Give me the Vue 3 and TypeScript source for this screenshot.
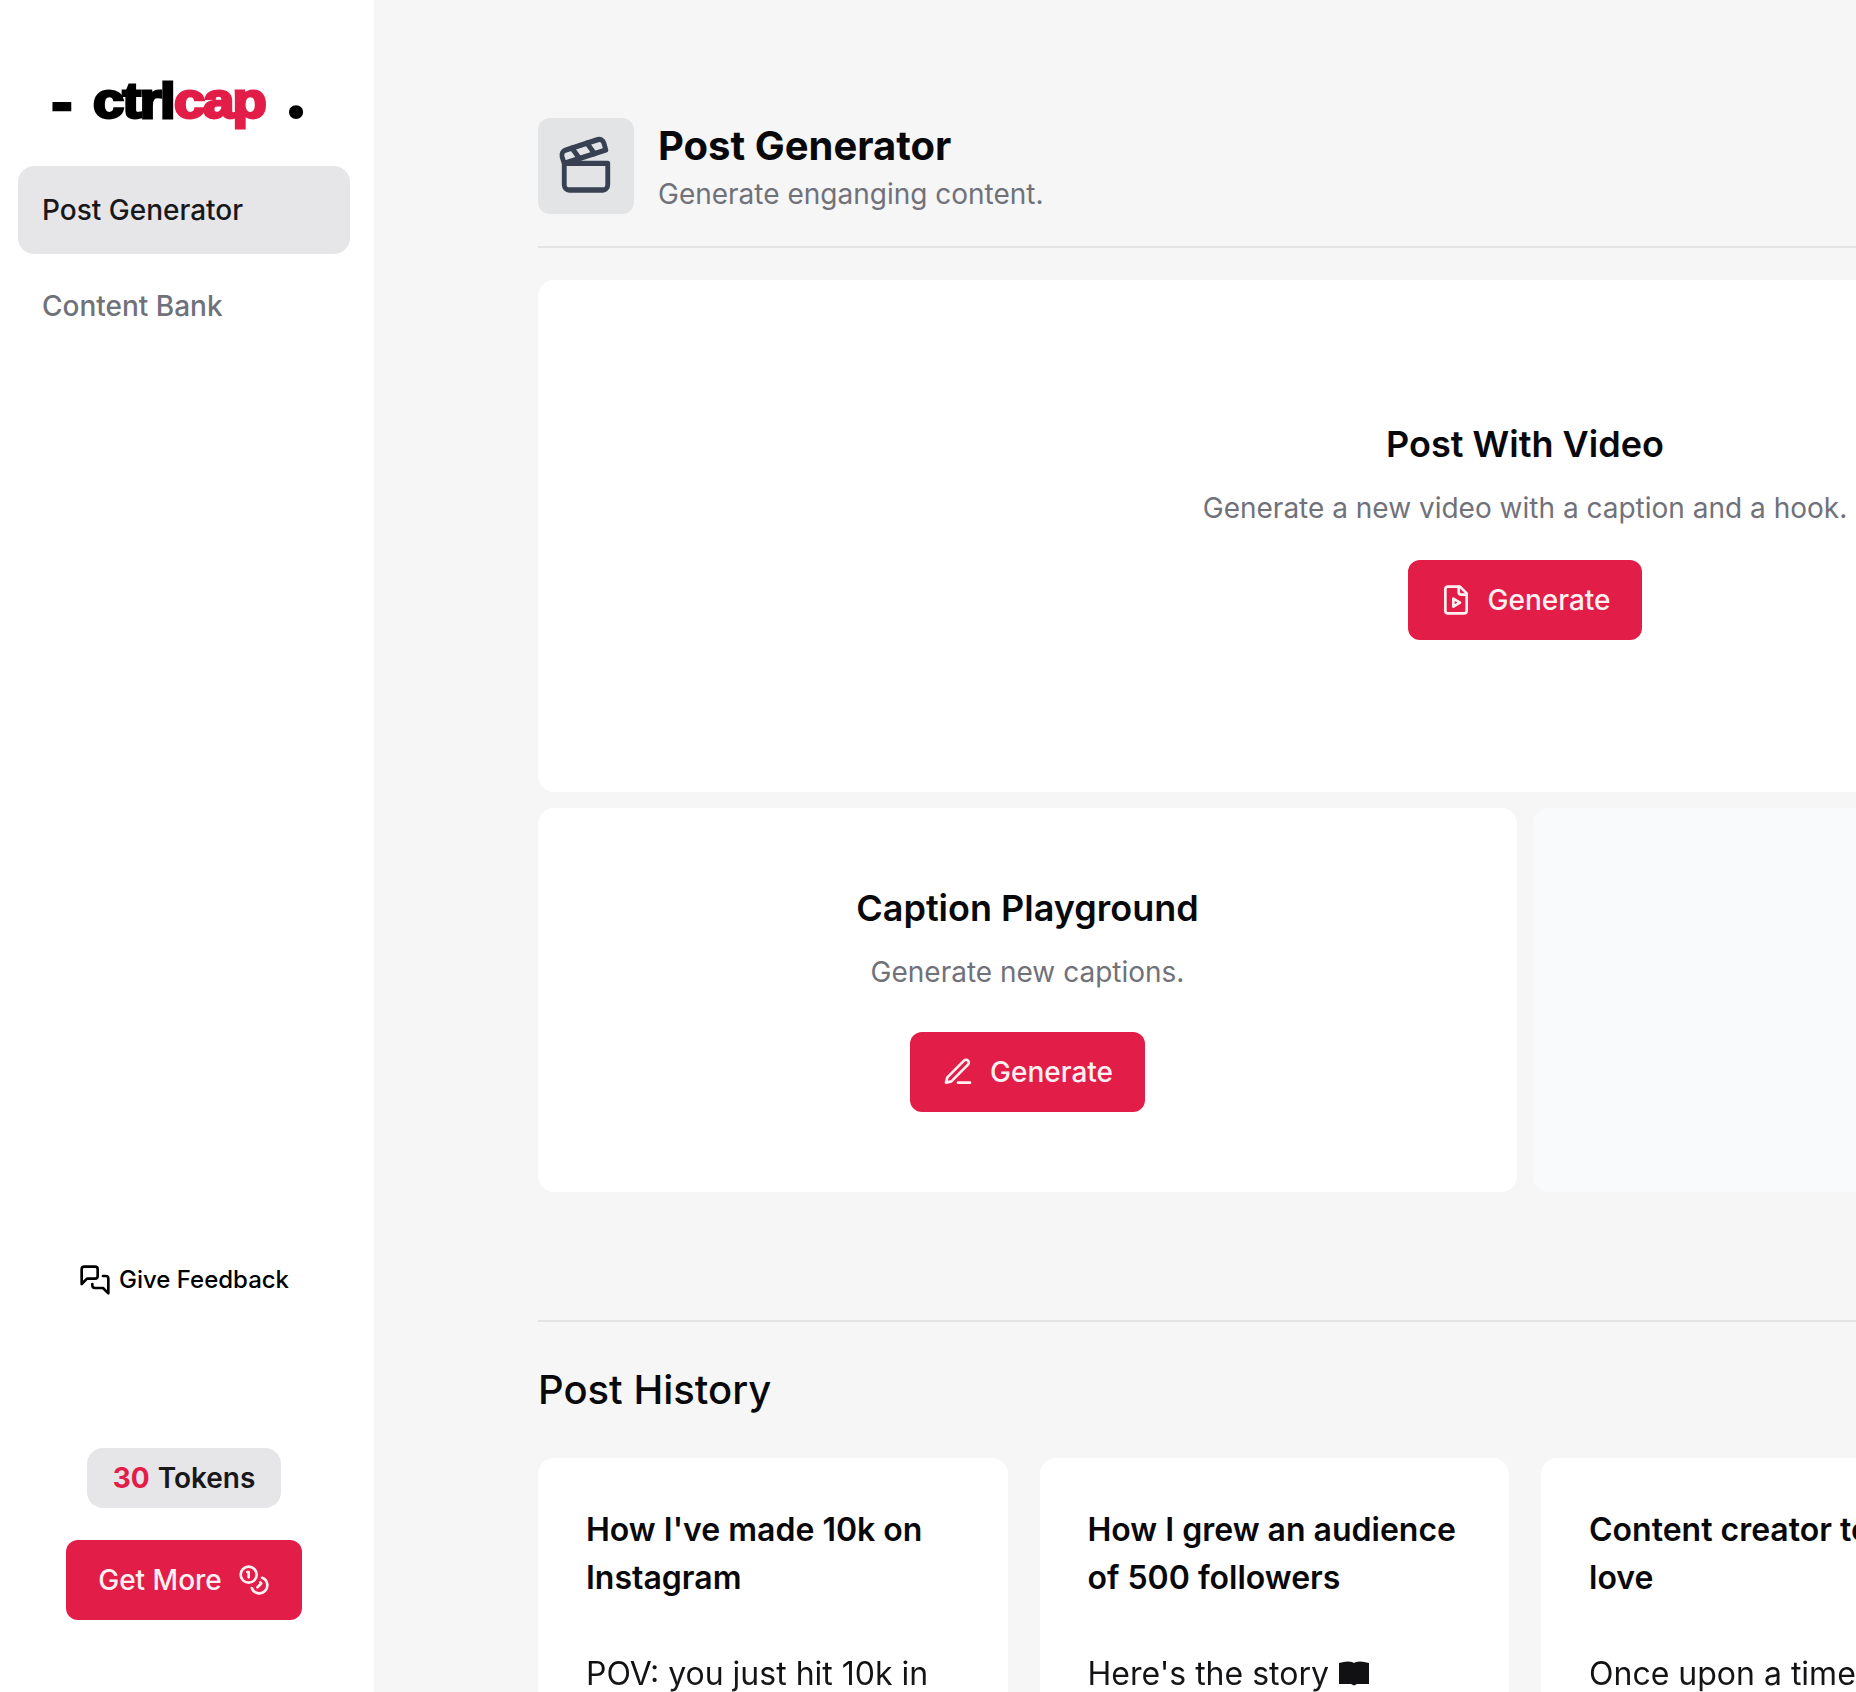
<script setup lang="ts">
interface Post {
  title: string
  body: string
  book?: boolean
}

const nav = [
  { label: 'Post Generator', active: true },
  { label: 'Content Bank', active: false },
]

const posts: Post[] = [
  { title: "How I've made 10k on Instagram", body: 'POV: you just hit 10k in' },
  { title: 'How I grew an audience of 500 followers', body: "Here's the story ", book: true },
  { title: 'Content creator to\nlove', body: 'Once upon a time' },
  { title: '', body: '' },
]
</script>

<template>
  <div class="app">
    <aside class="sidebar">
      <div class="logo">
        <span class="dash">-</span>
        <span class="word"><span class="ctrl">ctrl</span><span class="accent">cap</span></span>
        <span class="dot">.</span>
      </div>
      <nav class="nav">
        <a v-for="item in nav" :key="item.label" class="nav-item" :class="{ active: item.active }">{{ item.label }}</a>
      </nav>
      <div class="side-foot">
        <a class="feedback">
          <svg class="ico" viewBox="0 0 24 24"><path d="M14 9a2 2 0 0 1-2 2H6l-4 4V4a2 2 0 0 1 2-2h8a2 2 0 0 1 2 2z" /><path d="M18 9h2a2 2 0 0 1 2 2v11l-4-4h-6a2 2 0 0 1-2-2v-1" /></svg>
          Give Feedback
        </a>
        <div class="tokens"><b>30</b> Tokens</div>
        <button class="btn more">
          Get More
          <svg class="ico" viewBox="0 0 24 24"><circle cx="8" cy="8" r="6" /><path d="M18.09 10.37A6 6 0 1 1 10.34 18" /><path d="M7 6h1v4" /><path d="m16.71 13.88.7.71-2.82 2.82" /></svg>
        </button>
      </div>
    </aside>

    <main class="main">
      <header class="header">
        <div class="tile">
          <svg class="ico clap" viewBox="0 0 24 24" preserveAspectRatio="none"><path d="M20.2 6 3 11l-.9-2.4c-.3-1.1.3-2.2 1.3-2.5l13.5-4c1.1-.3 2.2.3 2.5 1.3Z" /><path d="m6.2 5.3 3.1 3.9" /><path d="m12.4 3.4 3.1 4" /><path d="M3 11h18v8a2 2 0 0 1-2 2H5a2 2 0 0 1-2-2Z" /></svg>
        </div>
        <div>
          <h1>Post Generator</h1>
          <p class="sub">Generate enganging content.</p>
        </div>
      </header>

      <section class="card hero">
        <h2>Post With Video</h2>
        <p>Generate a new video with a caption and a hook.</p>
        <button class="btn">
          <svg class="ico" viewBox="0 0 24 24"><path d="M15 2H6a2 2 0 0 0-2 2v16a2 2 0 0 0 2 2h12a2 2 0 0 0 2-2V7Z" /><path d="M14 2v4a2 2 0 0 0 2 2h4" /><path d="m10 11 5 3-5 3v-6Z" /></svg>
          Generate
        </button>
      </section>

      <div class="row">
        <section class="card caption">
          <h2>Caption Playground</h2>
          <p>Generate new captions.</p>
          <button class="btn">
            <svg class="ico" viewBox="0 0 24 24"><path d="M12 20h9" /><path d="M16.5 3.5a2.12 2.12 0 0 1 3 3L7 19l-4 1 1-4Z" /></svg>
            Generate
          </button>
        </section>
        <section class="card blank"></section>
      </div>

      <section class="history">
        <h2 class="history-title">Post History</h2>
        <div class="posts">
          <article v-for="(post, i) in posts" :key="i" class="card post">
            <h3>{{ post.title }}</h3>
            <p>{{ post.body }}<svg v-if="post.book" class="book" viewBox="0 0 30 25"><path d="M0 2Q8-.5 13 1L15 2L17 1Q22-.5 30 2V23H18L15 24.500L12 23H0Z" /></svg></p>
          </article>
        </div>
      </section>
    </main>
  </div>
</template>

<style>
body { margin: 0; overflow: hidden; }
</style>

<style scoped>
.app {
  display: flex;
  width: 1856px;
  height: 1692px;
  overflow: hidden;
  background: #f6f6f6;
  color: #09090b;
  font-family: Inter, "Liberation Sans", sans-serif;
  font-size: 28px;
  line-height: 40px;
}
h1, h2, h3, p { margin: 0; }
.ico {
  width: 32px;
  height: 32px;
  flex: none;
  fill: none;
  stroke: currentColor;
  stroke-width: 2;
  stroke-linecap: round;
  stroke-linejoin: round;
}
.sidebar {
  width: 374px;
  flex: none;
  box-sizing: border-box;
  padding: 57px 24px 72px 18px;
  background: #fff;
  display: flex;
  flex-direction: column;
}
.logo {
  display: flex;
  align-items: baseline;
  height: 72px;
  margin-bottom: 37px;
  padding-left: 32px;
  color: #000;
  font-weight: 900;
  line-height: 72px;
}
.dash { width: 43px; font-size: 50px; -webkit-text-stroke: 1.8px #000; transform: translateY(3px); }
.word {
  width: 190px;
  font-family: "Liberation Sans", Arial, sans-serif;
  font-size: 50px;
  font-weight: 700;
  transform: scaleX(1.12);
  transform-origin: 0 50%;
  -webkit-text-stroke: 2.8px currentColor;
  white-space: nowrap;
}
.ctrl { letter-spacing: -1.4px; }
.dot { font-size: 70px; }
.accent { color: #e11d48; letter-spacing: -1.6px; }
.nav { display: flex; flex-direction: column; gap: 8px; }
.nav-item {
  height: 88px;
  padding-left: 24px;
  border-radius: 16px;
  line-height: 88px;
  font-weight: 500;
  color: #71717a;
}
.nav-item.active { background: #e6e6e8; color: #18181b; }
.side-foot {
  margin-top: auto;
  display: flex;
  flex-direction: column;
  align-items: center;
}
.feedback {
  display: flex;
  align-items: center;
  gap: 8px;
  height: 32px;
  margin-bottom: 152px;
  color: #000;
  font-size: 24px;
  font-weight: 500;
}
.tokens {
  height: 60px;
  padding: 0 26px;
  margin-bottom: 32px;
  border-radius: 16px;
  background: #e6e6e8;
  color: #18181b;
  font-weight: 600;
  line-height: 60px;
}
.tokens b { color: #e11d48; font-weight: 700; margin-right: 1px; }
.btn {
  display: flex;
  align-items: center;
  gap: 16px;
  height: 80px;
  padding: 0 32px;
  border: 0;
  border-radius: 12px;
  background: #e11d48;
  color: #fff1f2;
  font: 500 28px/40px Inter, "Liberation Sans", sans-serif;
}
.main { flex: none; width: 1974px; padding: 118px 0 0 164px; }
.header {
  display: flex;
  gap: 24px;
  height: 128px;
  border-bottom: 2px solid #e2e3e4;
  margin-bottom: 32px;
}
.tile {
  display: flex;
  align-items: center;
  justify-content: center;
  width: 96px;
  height: 96px;
  border-radius: 12px;
  background: #e2e4e6;
  color: #374151;
}
.clap { width: 58px; height: 64px; }
h1 { font-size: 40px; line-height: 56px; font-weight: 700; }
.sub { color: #71717a; }
.card { background: #fff; border-radius: 16px; }
.hero, .caption {
  display: flex;
  flex-direction: column;
  align-items: center;
  box-sizing: border-box;
}
.hero { height: 512px; padding-top: 136px; }
.hero h2, .caption h2 { font-size: 36px; line-height: 56px; font-weight: 600; }
.hero p, .caption p { margin-top: 16px; color: #71717a; }
.hero .btn { margin-top: 32px; }
.row { display: flex; gap: 16px; margin-top: 16px; }
.row .card { flex: 1; height: 384px; }
.caption { padding-top: 72px; }
.caption .btn { margin-top: 40px; }
.blank { background: #f8fafc; }
.history { margin-top: 128px; border-top: 2px solid #e2e3e4; }
.history-title { margin-top: 40px; font-size: 40px; line-height: 56px; font-weight: 500; }
.posts { display: grid; grid-template-columns: repeat(4, 1fr); gap: 32px; margin-top: 40px; }
.post { padding: 48px; height: 400px; font-size: 32px; line-height: 48px; }
.post h3 { font-size: 32px; font-weight: 600; white-space: pre-line; }
.post p {
  margin-top: 48px;
  height: 240px;
  background: linear-gradient(#09090b, #71717a);
  background-clip: text;
  -webkit-background-clip: text;
  color: transparent;
}
.book { width: 30px; height: 25px; margin-left: 1px; fill: #111113; vertical-align: -1px; }
</style>
